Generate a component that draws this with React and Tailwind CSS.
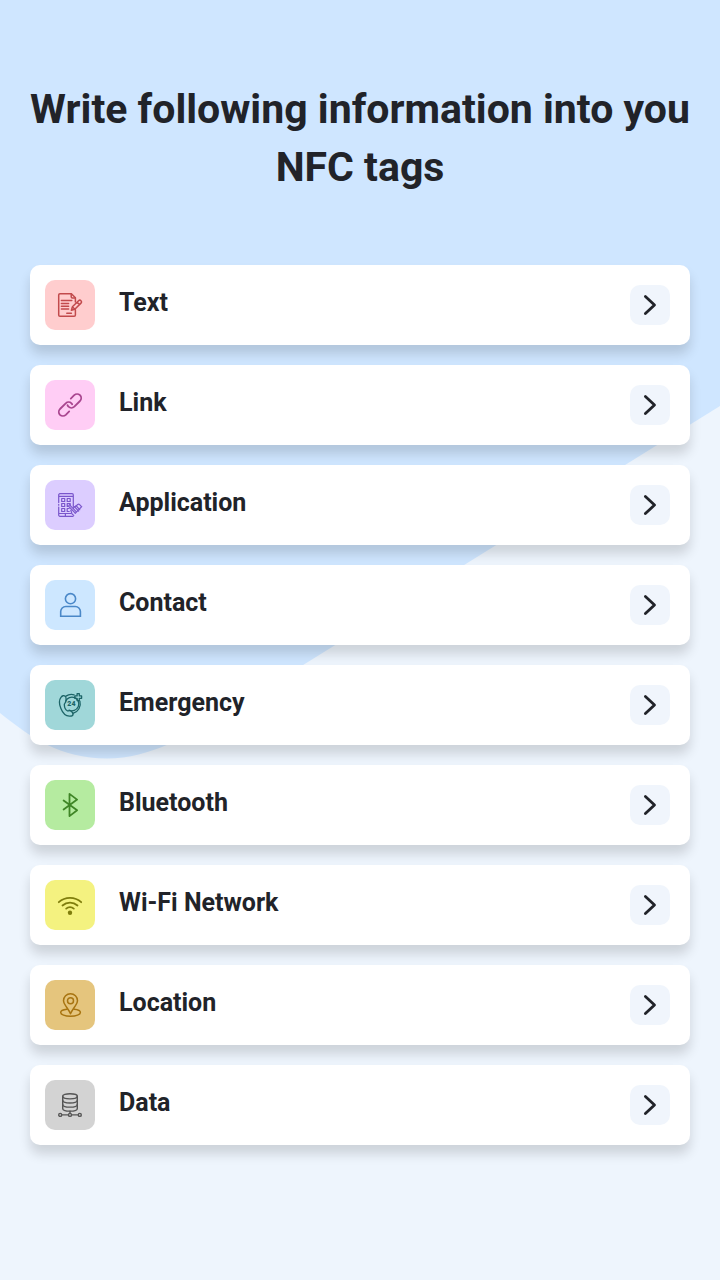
import React from "react";

function Icon({ children, width = 1.5 }) {
  return (
    <svg
      viewBox="0 0 24 24"
      className="size-6 overflow-visible"
      fill="none"
      stroke="currentColor"
      strokeWidth={width}
      strokeLinecap="round"
      strokeLinejoin="round"
      aria-hidden="true"
    >
      {children}
    </svg>
  );
}

const TextIcon = () => (
  <Icon>
    <path d="M17.4 9V4.8L13.4.7H2A1.3 1.3 0 0 0 .7 2v20A1.3 1.3 0 0 0 2 23.3h14.1a1.3 1.3 0 0 0 1.3-1.3v-5.2" />
    <path d="M13.2.9v2.8a1.2 1.2 0 0 0 1.2 1.2h2.8" />
    <path d="M3.4 7.6h10.4M3.4 10.4h7.2M3.4 13.3h7.2M3.4 16.1h7.2M8.8 20.2h4.6" />
    <path d="m13.4 17.2 1-3.4 6.2-6.1a1.7 1.7 0 0 1 2.4 0 1.7 1.7 0 0 1 0 2.4l-6.2 6.1zM19.1 9.2l2.4 2.4M14.4 13.8l2.4 2.4" />
  </Icon>
);

const LinkIcon = () => (
  <Icon width={1.8}>
    <path d="M12.8 5.6 16.2 2.200a4.200 4.200 0 0 1 5.800 0 4.200 4.200 0 0 1 0 5.800l-5.700 5.700a4.200 4.200 0 0 1-5.800 0c-.5-.5-.8-1-1-1.600" />
    <path d="m11.200 18.400-3.400 3.400a4.200 4.200 0 0 1-5.800 0 4.200 4.200 0 0 1 0-5.800l5.700-5.700a4.200 4.200 0 0 1 5.800 0c.3.3.5.600.7 1" />
  </Icon>
);

const ApplicationIcon = () => (
  <Icon width={1.2}>
    <path d="M.7 9.5V1.9A1.2 1.2 0 0 1 1.9.7h12.2a1.2 1.2 0 0 1 1.2 1.2v11.6M.7 14v8.1a1.2 1.2 0 0 0 1.2 1.2h13.2M.7 11.4v.8M.7 3.3h14.6M.7 20.5h12.5M7.4 20.5v2.6" />
    <path d="M3.7 5.5h3v3h-3zM9.2 5.5h3v3h-3zM3.7 10.5h3v3h-3zM3.7 15.5h3v3h-3zM10 13.5H9.2v-3h3v2M11.2 18.5h-2v-3h2" />
    <path d="m9.800 12.400 7 7.300M11.300 11.600l6.600 6.700M12.800 17.300l1.200 3.600 1.700 1.500M15.200 15.300l1.200-1.700 4.200 4.500M16.900 14.100l1.100-1.500 3.700 4.100M18.500 12.700l1.200-1.200a1.400 1.400 0 0 1 1.900.100l1.900 2.100M23.700 13.700l-6.500 6.700" />
  </Icon>
);

const ContactIcon = () => (
  <Icon width={1.6}>
    <circle cx="12.5" cy="5.7" r="5.1" />
    <path d="M2.7 23.2v-4.6a5.1 5.1 0 0 1 5.1-5.1h9.5a5.1 5.1 0 0 1 5.1 5.1v4.6z" strokeLinejoin="miter" />
  </Icon>
);

const EmergencyIcon = () => (
  <Icon width={1.3}>
    <path d="M7.400 3.400c-1.500-1.300-3.200-.7-4.300.8-2 2.600-2 6.900-.3 11.100 1.800 4.600 5.200 7.800 8.600 7.900 2 .1 3.600-.6 3.700-2.100.1-1.300-1.900-3.300-3.400-3.500-.9-.1-1.600.6-2.400.2-1.700-.9-2.900-3.700-3-6.300 0-1.100 1-1.400 1.400-2.400.5-1.400.6-4.800-.3-5.700z" />
    <path d="M7.600 8.200a6.900 6.900 0 1 1 3.400 9" />
    <path d="M8 3.100a9.800 9.800 0 0 1 8.100-1.300M21.900 8.200a9.900 9.900 0 0 1-6.900 12.200" />
    <path d="M19.100.6h2.200v2.300h2.300v2.400h-2.300v2.300h-2.200V5.300h-2.300V2.900h2.300z" />
    <text
      x="13.400"
      y="13.300"
      fill="currentColor"
      stroke="none"
      textAnchor="middle"
      fontSize="7"
      fontWeight="900"
      fontFamily="Roboto, sans-serif"
    >
      24
    </text>
  </Icon>
);

const BluetoothIcon = () => (
  <Icon width={1.8}>
    <path d="m5.6 7.500 13.500 9.700-7.600 5.900V.900l7.600 5.700L5.600 16.500" />
  </Icon>
);

const WifiIcon = () => (
  <Icon width={1.8}>
    <path d="M.8 9.200a16.6 16.6 0 0 1 22.400 0M4.500 12.500a11.2 11.2 0 0 1 15 0M8.200 15.600a5.8 5.8 0 0 1 7.600 0" />
    <circle cx="12" cy="19.800" r="2.200" fill="currentColor" stroke="none" />
  </Icon>
);

const LocationIcon = () => (
  <Icon width={1.500}>
    <path d="M12.500 20.700c-1.300-3-3-5.100-4.800-7.800C6.200 10.700 5.500 9.500 5.500 7.700a7 7 0 0 1 14 0c0 1.800-.7 3-2.200 5.200-1.800 2.700-3.500 4.800-4.800 7.800z" />
    <circle cx="12.500" cy="7.700" r="3" />
    <path d="M8.900 16.200c-3.700.4-6.200 1.600-6.200 3.200 0 2.200 4.200 3.900 9.800 3.900s9.900-1.700 9.900-3.900c0-1.600-2.500-2.800-6.300-3.200" />
  </Icon>
);

const DataIcon = () => (
  <Icon width={1.400}>
    <ellipse cx="12" cy="3.300" rx="7.300" ry="2.600" />
    <path d="M4.700 3.300v12.100c0 1.500 3.200 2.700 7.300 2.700s7.300-1.200 7.300-2.700V3.300" />
    <path d="M4.700 7.300c0 1.500 3.200 2.700 7.300 2.700s7.300-1.200 7.300-2.700M4.700 11.400c0 1.500 3.200 2.700 7.300 2.700s7.300-1.200 7.300-2.700M12 18.100v2.100M3.600 21.900h6.800M13.600 21.900h6.800" />
    <circle cx="2.200" cy="21.900" r="1.500" />
    <circle cx="12" cy="21.900" r="1.500" />
    <circle cx="21.800" cy="21.900" r="1.500" />
  </Icon>
);

const items = [
  { id: "text", label: "Text", icon: TextIcon, tile: "bg-[#ffcdce] text-[#c24a4c]" },
  { id: "link", label: "Link", icon: LinkIcon, tile: "bg-[#ffcdf5] text-[#a9458f]" },
  { id: "application", label: "Application", icon: ApplicationIcon, tile: "bg-[#dccdff] text-[#7a56cc]" },
  { id: "contact", label: "Contact", icon: ContactIcon, tile: "bg-[#cde7ff] text-[#4a88c8]" },
  { id: "emergency", label: "Emergency", icon: EmergencyIcon, tile: "bg-[#a0d7d9] text-[#1c6467]" },
  { id: "bluetooth", label: "Bluetooth", icon: BluetoothIcon, tile: "bg-[#b5eba0] text-[#3f8526]" },
  { id: "wifi", label: "Wi-Fi Network", icon: WifiIcon, tile: "bg-[#f4f280] text-[#7f7d0c]" },
  { id: "location", label: "Location", icon: LocationIcon, tile: "bg-[#e5c57d] text-[#a87410]" },
  { id: "data", label: "Data", icon: DataIcon, tile: "bg-[#d3d3d3] text-[#555555]" },
];

function TagRow({ item }) {
  const Glyph = item.icon;
  return (
    <li>
      <a
        href={"#" + item.id}
        className="flex items-center rounded-[10px] bg-white py-[15px] pr-5 pl-[15px] shadow-[0_9px_12px_rgba(0,0,0,0.14)]"
      >
        <span className={"grid size-[50px] place-items-center rounded-[10px] " + item.tile}>
          <Glyph />
        </span>
        <span className="ml-6 flex-1 pb-1 text-[25px] leading-8 font-bold">{item.label}</span>
        <span className="grid size-10 place-items-center rounded-[10px] bg-[#f0f5fc]">
          <svg
            viewBox="0 0 24 24"
            className="size-6"
            fill="none"
            stroke="currentColor"
            strokeWidth="2.800"
            strokeLinecap="round"
            strokeLinejoin="round"
            aria-hidden="true"
          >
            <path d="m7.400 3.400 9.100 8.600-9.100 8.600" />
          </svg>
        </span>
      </a>
    </li>
  );
}

export default function App() {
  return (
    <div className="relative isolate min-h-screen overflow-hidden bg-[#eef5fd] font-['Roboto',sans-serif] text-[#212329]">
      <svg
        viewBox="0 0 720 760"
        className="absolute inset-x-0 top-0 -z-10 w-full text-[#cfe6ff]"
        aria-hidden="true"
      >
        <path
          fill="currentColor"
          d="M0 0H720V406L230 710.500C190 735 150 758.500 107 758.500C60 758.500 30 737 0 713Z"
        />
      </svg>
      <main className="px-[30px] pt-20 pb-[135px]">
        <h1 className="-mx-2 text-center text-[41px] leading-[58px] font-bold">
          Write following information into you NFC tags
        </h1>
        <ul className="mt-[69px] flex flex-col gap-5">
          {items.map((item) => (
            <TagRow key={item.id} item={item} />
          ))}
        </ul>
      </main>
    </div>
  );
}
